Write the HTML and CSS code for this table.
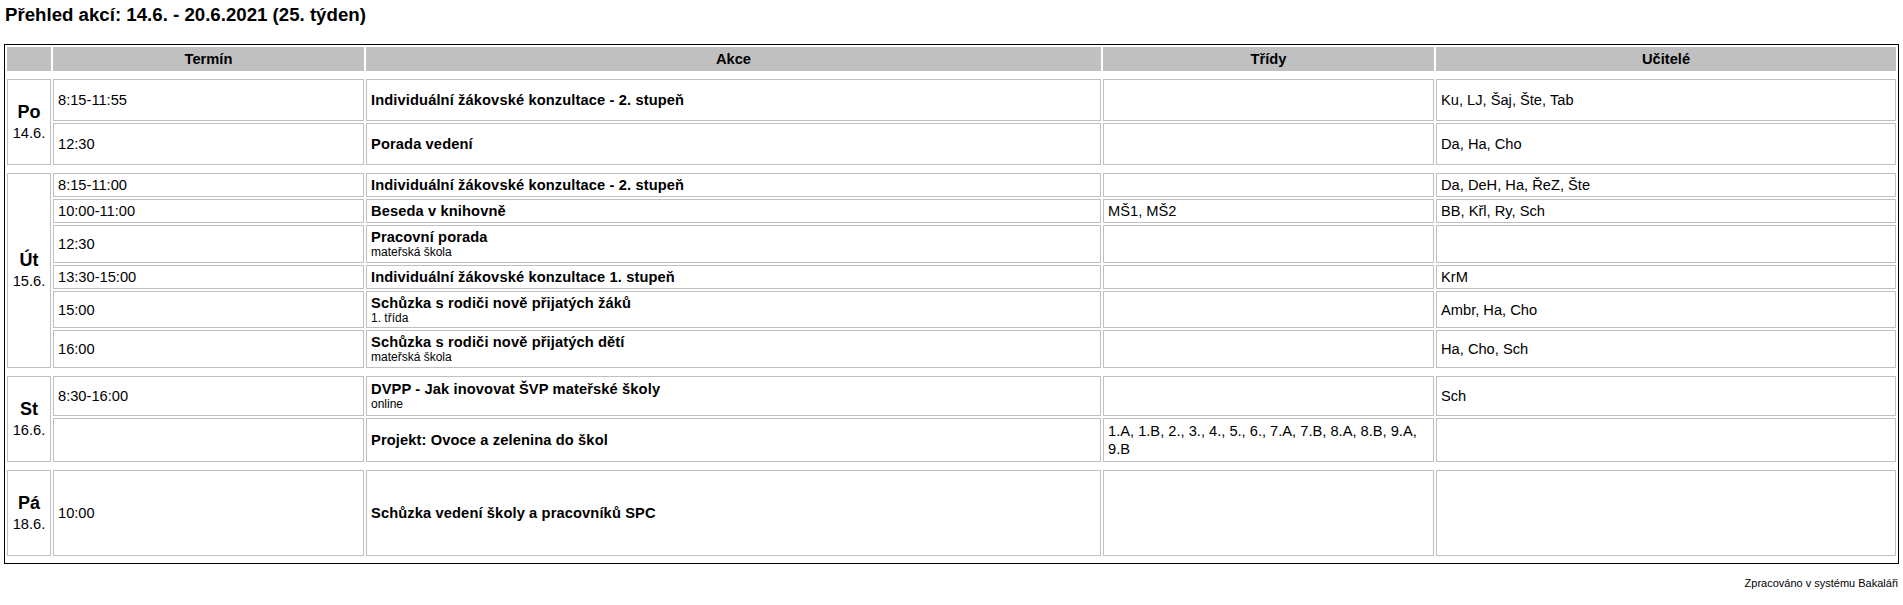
FILE: index.html
```html
<!DOCTYPE html>
<html lang="cs">
<head>
<meta charset="utf-8">
<title>Přehled akcí</title>
<link rel="stylesheet" href="styles.css">
</head>
<body>
<h1 class="title">Přehled akcí: 14.6. - 20.6.2021 (25. týden)</h1>
<table class="events">
  <colgroup>
    <col class="c-day"><col class="c-time"><col class="c-name"><col class="c-class"><col class="c-teach">
  </colgroup>
  <thead>
    <tr><th></th><th>Termín</th><th>Akce</th><th>Třídy</th><th>Učitelé</th></tr>
  </thead>
  <tbody>
    <tr class="gap"><td colspan="5"></td></tr>

    <tr>
      <td class="day" rowspan="2"><div class="dname">Po</div><div class="ddate">14.6.</div></td>
      <td>8:15-11:55</td>
      <td class="name"><div class="ename">Individuální žákovské konzultace - 2. stupeň</div></td>
      <td></td>
      <td>Ku, LJ, Šaj, Šte, Tab</td>
    </tr>
    <tr>
      <td>12:30</td>
      <td class="name"><div class="ename">Porada vedení</div></td>
      <td></td>
      <td>Da, Ha, Cho</td>
    </tr>

    <tr class="gap"><td colspan="5"></td></tr>

    <tr>
      <td class="day" rowspan="6"><div class="dname">Út</div><div class="ddate">15.6.</div></td>
      <td>8:15-11:00</td>
      <td class="name"><div class="ename">Individuální žákovské konzultace - 2. stupeň</div></td>
      <td></td>
      <td>Da, DeH, Ha, ŘeZ, Šte</td>
    </tr>
    <tr>
      <td>10:00-11:00</td>
      <td class="name"><div class="ename">Beseda v knihovně</div></td>
      <td>MŠ1, MŠ2</td>
      <td>BB, Křl, Ry, Sch</td>
    </tr>
    <tr>
      <td>12:30</td>
      <td class="name"><div class="ename">Pracovní porada</div><div class="esub">mateřská škola</div></td>
      <td></td>
      <td></td>
    </tr>
    <tr>
      <td>13:30-15:00</td>
      <td class="name"><div class="ename">Individuální žákovské konzultace 1. stupeň</div></td>
      <td></td>
      <td>KrM</td>
    </tr>
    <tr>
      <td>15:00</td>
      <td class="name"><div class="ename">Schůzka s rodiči nově přijatých žáků</div><div class="esub">1. třída</div></td>
      <td></td>
      <td>Ambr, Ha, Cho</td>
    </tr>
    <tr>
      <td>16:00</td>
      <td class="name"><div class="ename">Schůzka s rodiči nově přijatých dětí</div><div class="esub">mateřská škola</div></td>
      <td></td>
      <td>Ha, Cho, Sch</td>
    </tr>

    <tr class="gap"><td colspan="5"></td></tr>

    <tr>
      <td class="day" rowspan="2"><div class="dname">St</div><div class="ddate">16.6.</div></td>
      <td>8:30-16:00</td>
      <td class="name"><div class="ename">DVPP - Jak inovovat ŠVP mateřské školy</div><div class="esub">online</div></td>
      <td></td>
      <td>Sch</td>
    </tr>
    <tr>
      <td></td>
      <td class="name"><div class="ename">Projekt: Ovoce a zelenina do škol</div></td>
      <td>1.A, 1.B, 2., 3., 4., 5., 6., 7.A, 7.B, 8.A, 8.B, 9.A, 9.B</td>
      <td></td>
    </tr>

    <tr class="gap"><td colspan="5"></td></tr>

    <tr>
      <td class="day"><div class="dname">Pá</div><div class="ddate">18.6.</div></td>
      <td>10:00</td>
      <td class="name"><div class="ename">Schůzka vedení školy a pracovníků SPC</div></td>
      <td></td>
      <td></td>
    </tr>

    <tr class="gap gap-end"><td colspan="5"></td></tr>
  </tbody>
</table>
<div class="footer">Zpracováno v systému Bakaláři</div>
</body>
</html>
```

FILE: styles.css
```css
body {
  margin: 0 4px;
  font-family: "Liberation Sans", Arial, sans-serif;
  color: #000;
  background: #fff;
}

.title {
  margin: 4px 0 18px 1px;
  font-size: 18.67px;
  line-height: 22px;
  font-weight: bold;
}

.events {
  width: 100%;
  table-layout: fixed;
  border: 1px solid #000;
  border-spacing: 2px;
  font-size: 14.67px;
}

.c-day { width: 44px; }
.c-time { width: 311px; }
.c-name { width: 735px; }
.c-class { width: 331px; }

.events th {
  box-sizing: border-box;
  height: 24px;
  padding: 0 4px;
  background: #c0c0c0;
  border: 1px solid #c0c0c0;
  font-weight: bold;
  text-align: center;
  vertical-align: middle;
  line-height: 18px;
}

.events td {
  border: 1px solid #c0c0c0;
  padding: 2px 4px;
  line-height: 18px;
  vertical-align: middle;
  text-align: left;
}

.events td.day {
  box-sizing: border-box;
  height: 86px;
  padding: 2px 0;
  text-align: center;
}

.dname {
  font-size: 18px;
  font-weight: bold;
  line-height: 21px;
}

.ddate {
  font-size: 14.67px;
  line-height: 20px;
}

.ename {
  font-weight: bold;
  letter-spacing: 0.12px;
  line-height: 18px;
}

.esub {
  font-size: 12px;
  line-height: 13.67px;
}

.events tr.gap td {
  border: 0;
  padding: 0;
  height: 4px;
  font-size: 0;
  line-height: 0;
}

.events tr.gap-end td {
  height: 3px;
}

.footer {
  margin-top: 13px;
  padding-right: 1px;
  text-align: right;
  font-size: 11px;
}
```
